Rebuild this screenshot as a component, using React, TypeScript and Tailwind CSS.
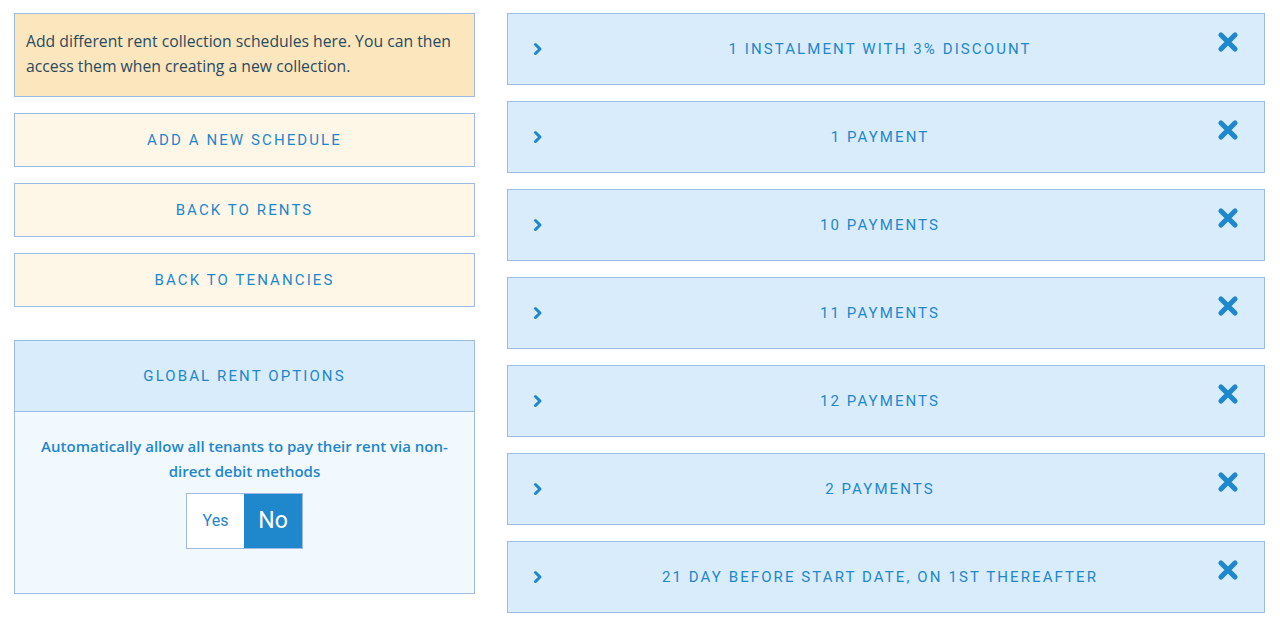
import { useState } from "react";

const schedules = [
  "1 instalment with 3% discount",
  "1 payment",
  "10 payments",
  "11 payments",
  "12 payments",
  "2 payments",
  "21 day before start date, on 1st thereafter",
];

function Chevron() {
  return (
    <svg width="10" height="14" viewBox="0 0 10 14" className="shrink-0">
      <path d="M2.5 2.5l4.5 4.5-4.5 4.5" fill="none" stroke="#1f87cb" strokeWidth="3" strokeLinecap="round" strokeLinejoin="round" />
    </svg>
  );
}

function Cross() {
  return (
    <svg width="22" height="22" viewBox="0 0 22 22">
      <path d="M4 4l14 14M18 4L4 18" stroke="#1f87cb" strokeWidth="5.2" strokeLinecap="round" />
    </svg>
  );
}

function LinkButton({ label }: { label: string }) {
  return (
    <button className="flex h-[54px] w-full items-center justify-center border border-[#9fbbe3] bg-[#fef6e6] text-[15px] uppercase tracking-[0.14em] text-[#1f87cb]">
      {label}
    </button>
  );
}

export default function App() {
  const [allow, setAllow] = useState(false);

  return (
    <div className="flex gap-[32px] bg-white px-[14px] pt-[13px] font-['Roboto',sans-serif]">
      <div className="flex w-[461px] shrink-0 flex-col">
        <div className="border border-[#9fbbe3] bg-[#fbe6be] px-[11px] pt-[15px] pb-[17px] font-['Open_Sans',sans-serif] text-[15.75px] leading-[25px] text-[#2a4a5e]">
          Add different rent collection schedules here. You can then access them when creating a new collection.
        </div>
        <div className="mt-[16px] flex flex-col gap-[16px]">
          <LinkButton label="Add a new schedule" />
          <LinkButton label="Back to rents" />
          <LinkButton label="Back to tenancies" />
        </div>

        <div className="mt-[33px] border border-[#9fbbe3]">
          <div className="flex h-[71px] items-center justify-center border-b border-[#9fbbe3] bg-[#d8ecfb] text-[15px] uppercase tracking-[0.14em] text-[#1f87cb]">
            Global rent options
          </div>
          <div className="flex h-[181px] flex-col items-center bg-[#f1f8fe] px-[20px] pt-[22px]">
            <p className="text-center font-['Open_Sans',sans-serif] text-[15px] font-semibold leading-[25px] text-[#1f87cb]">
              Automatically allow all tenants to pay their rent via non-direct debit methods
            </p>
            <div className="mt-[9px] flex h-[56px] border border-[#9fbbe3]">
              <button
                onClick={() => setAllow(true)}
                className={`w-[57px] text-[16px] ${allow ? "bg-[#1f87cb] text-white" : "bg-white text-[#1f87cb]"}`}
              >
                Yes
              </button>
              <button
                onClick={() => setAllow(false)}
                className={`w-[58px] text-[23px] ${allow ? "bg-white text-[#1f87cb]" : "bg-[#1f87cb] text-white"}`}
              >
                No
              </button>
            </div>
          </div>
        </div>
      </div>

      <div className="flex w-[758px] shrink-0 flex-col gap-[16px]">
        {schedules.map((s) => (
          <div
            key={s}
            className="flex h-[72px] items-start border border-[#9fbbe3] bg-[#d8ecfb] pl-[25px] pr-[23px] text-[15px] uppercase tracking-[0.14em] text-[#1f87cb]"
          >
            <div className="mt-[28px]">
              <Chevron />
            </div>
            <span className="mt-[24px] flex-1 text-center">{s}</span>
            <button className="mt-[17px] mr-[2px]">
              <Cross />
            </button>
          </div>
        ))}
      </div>
    </div>
  );
}
